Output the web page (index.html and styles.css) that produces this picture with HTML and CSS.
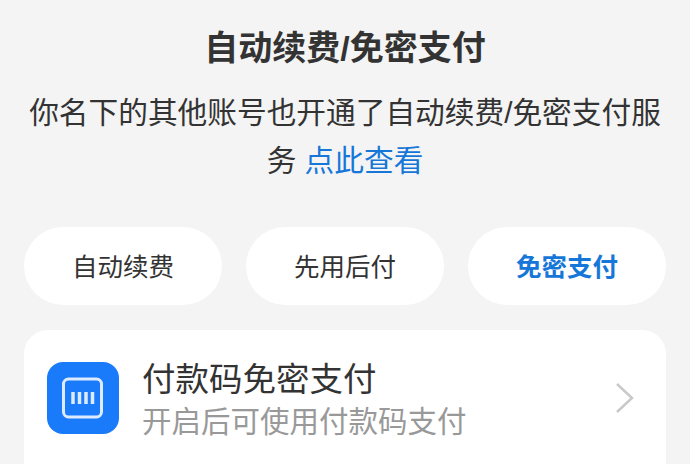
FILE: index.html
```html
<!DOCTYPE html>
<html lang="zh-CN">
<head>
    <meta charset="UTF-8">
    <title>自动续费/免密支付</title>
    <link rel="stylesheet" href="styles.css">
</head>
<body>
    <div class="container">
        <h1 class="title">自动续费/免密支付</h1>
        <p class="notice">你名下的其他账号也开通了自动续费/免密支付服务 <span class="link">点此查看</span></p>

        <div class="tabs">
            <div class="tab">自动续费</div>
            <div class="tab">先用后付</div>
            <div class="tab active">免密支付</div>
        </div>

        <div class="card">
            <div class="card-icon">
                <svg width="44" height="44" viewBox="0 0 44 44" fill="none" stroke="#fff" stroke-opacity="0.85">
                    <rect x="2.500" y="3" width="38" height="38" rx="5" stroke-width="3"/>
                    <path d="M12 16v12M18.500 16v12M25 16v12M31.500 16v12" stroke-width="3.500"/>
                </svg>
            </div>
            <div class="card-text">
                <div class="card-title">付款码免密支付</div>
                <div class="card-desc">开启后可使用付款码支付</div>
            </div>
            <svg class="chevron" width="20" height="32" viewBox="0 0 20 32" fill="none" stroke="#c9c9c9" stroke-width="2.500">
                <path d="M2 2l15 14L2 30"/>
            </svg>
        </div>
    </div>
</body>
</html>
```

FILE: styles.css
```css
body {
    margin: 0;
    background: #f4f4f4;
    color: #333;
    font-family: "Liberation Sans", "Noto Sans CJK SC", sans-serif;
}

.container {
    height: 464px;
    overflow: hidden;
    padding: 0 24px;
    box-sizing: border-box;
}

.title {
    margin: 0;
    padding-top: 26px;
    font-size: 34px;
    line-height: 44px;
    font-weight: 700;
    text-align: center;
}

.notice {
    margin: 19px 0 0 0;
    font-size: 29.700px;
    line-height: 48px;
    text-align: center;
}

.link {
    color: #1677d8;
}

.tabs {
    display: flex;
    justify-content: space-between;
    margin-top: 42px;
}

.tab {
    width: 198px;
    height: 78px;
    padding-top: 2px;
    box-sizing: border-box;
    line-height: 76px;
    border-radius: 39px;
    background: #fff;
    font-size: 25.500px;
    text-align: center;
}

.tab.active {
    color: #1677d8;
    font-weight: 700;
}

.card {
    display: flex;
    align-items: center;
    margin-top: 25px;
    height: 136px;
    padding: 0 24px 0 23px;
    background: #fff;
    border-radius: 24px 24px 0 0;
}

.card-icon {
    display: flex;
    align-items: center;
    justify-content: center;
    width: 72px;
    height: 72px;
    border-radius: 16px;
    background: #1a7bfa;
}

.card-text {
    flex: 1;
    margin-left: 23px;
    padding-top: 4px;
}

.card-title {
    font-size: 33.500px;
    line-height: 40px;
}

.card-desc {
    margin-top: 4px;
    font-size: 29.500px;
    line-height: 36px;
    color: #999;
}

.chevron {
    margin-right: 7px;
}
```
